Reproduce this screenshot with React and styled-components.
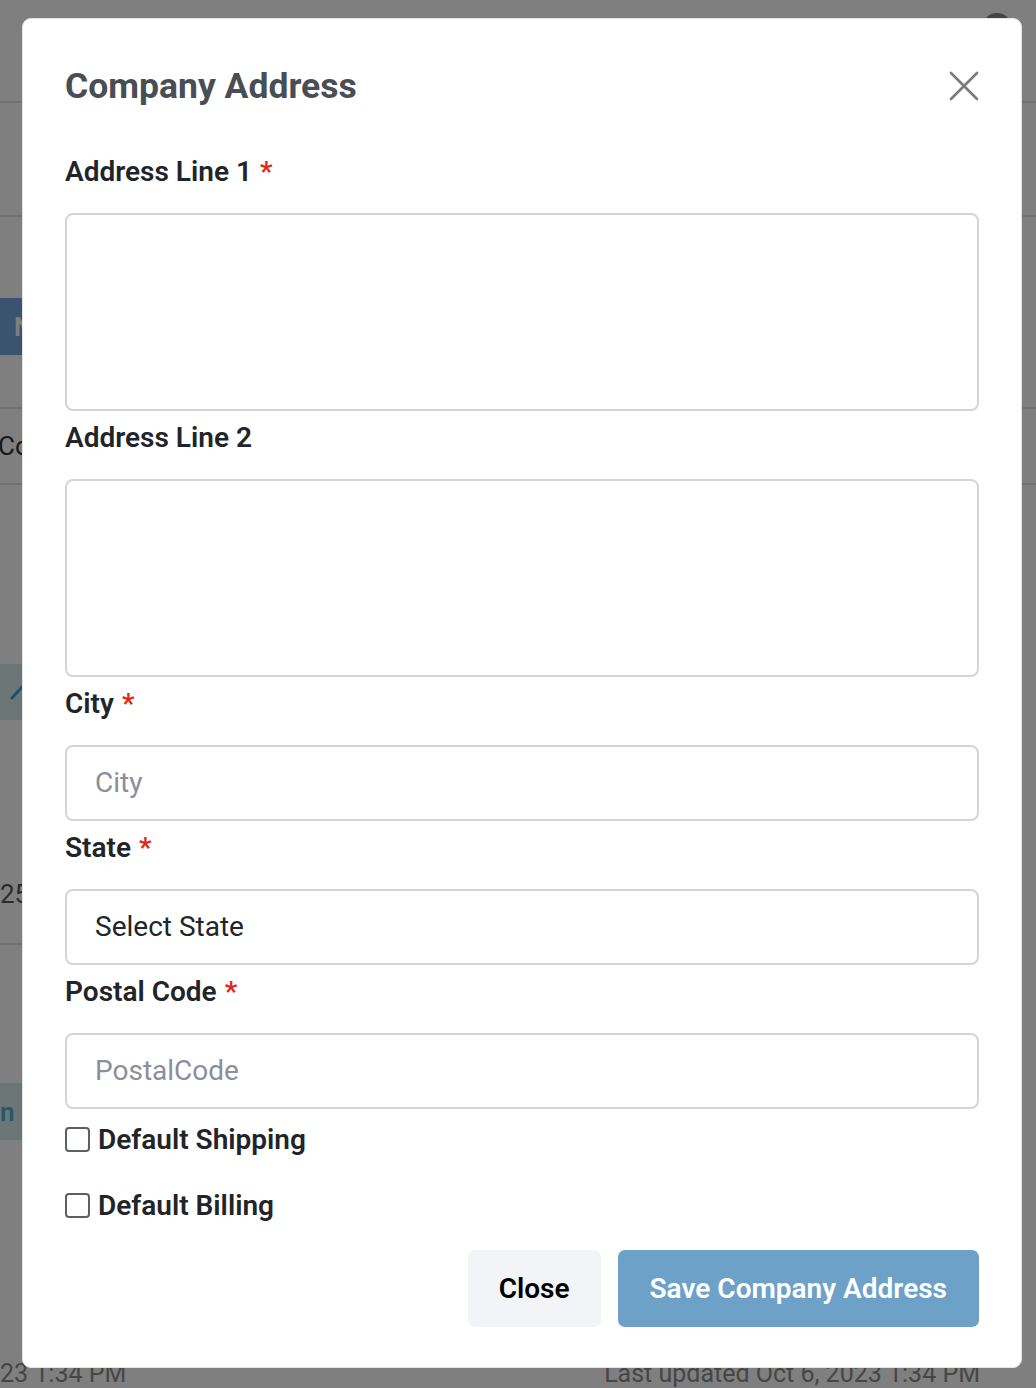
import React from "react";
import styled, { createGlobalStyle } from "styled-components";

const GlobalStyle = createGlobalStyle`
  html, body {
    margin: 0;
    padding: 0;
    background: #ffffff;
    font-family: Roboto, "Liberation Sans", Arial, sans-serif;
  }
  * {
    box-sizing: border-box;
  }
`;

// 뒤쪽 페이지 (모달 뒤에 흐릿하게 보이는 부분)
const Page = styled.div`
  width: 1036px;
  height: 1388px;
  overflow: hidden;
  display: flex;
  flex-direction: column;
  color: #333;
`;

const PageRow = styled.div`
  height: ${(p) => p.h}px;
  width: ${(p) => p.w || "100%"};
  flex-shrink: 0;
  display: flex;
  align-items: ${(p) => p.align || "center"};
  justify-content: space-between;
  border-bottom: ${(p) => (p.line ? "2px solid #e2e2e2" : "0")};
  background: ${(p) => p.bg || "transparent"};
  font-size: ${(p) => p.fs || 26}px;
  color: ${(p) => p.color || "#888"};
`;

const RowText = styled.span`
  margin-left: ${(p) => p.ml || 0}px;
  margin-right: ${(p) => p.mr || 0}px;
  font-weight: ${(p) => p.weight || 400};
  white-space: nowrap;
`;

const Avatar = styled.div`
  width: 30px;
  height: 30px;
  border-radius: 50%;
  background: #888;
  margin-right: 24px;
  margin-top: 13px;
  align-self: flex-start;
`;

const Pencil = styled.svg`
  margin-left: 10px;
`;

// 모달 배경
const Backdrop = styled.div`
  position: fixed;
  inset: 0;
  background: rgba(0, 0, 0, 0.5);
  z-index: 999;
`;

const Dialog = styled.div`
  margin: 18px 0 0 22px;
  width: 1000px;
  background: #ffffff;
  border: 1px solid #e4e4e4;
  border-radius: 9px;
  padding: 46px 42px 40px;
  display: flex;
  flex-direction: column;
`;

// 상단 제목
const Header = styled.div`
  display: flex;
  align-items: center;
  justify-content: space-between;
  margin-bottom: 41px;
`;

const Title = styled.h2`
  margin: 0;
  font-size: 35.5px;
  line-height: 1.2;
  font-weight: 700;
  color: #494e55;
`;

const CloseIcon = styled.button`
  border: none;
  background: transparent;
  padding: 0;
  width: 30px;
  height: 30px;
  display: flex;
  cursor: pointer;
`;

const Group = styled.div`
  display: flex;
  flex-direction: column;
  margin-bottom: 4px;
`;

const Label = styled.label`
  font-size: 28px;
  line-height: 46px;
  font-weight: 600;
  color: #212529;
  margin-bottom: 18px;
`;

const Required = styled.span`
  color: #e3271b;
  margin-left: 8px;
`;

const TextArea = styled.textarea`
  height: 198px;
  width: 100%;
  border: 2px solid #d2d6db;
  border-radius: 8px;
  resize: none;
  padding: 16px 28px;
  font: inherit;
  font-size: 28px;
  outline: none;
`;

const Input = styled.input`
  height: 76px;
  width: 100%;
  border: 2px solid #d2d6db;
  border-radius: 8px;
  padding: 0 28px;
  font-family: inherit;
  font-size: 28px;
  color: #212529;
  outline: none;
  &::placeholder {
    color: #8b8e9b;
  }
`;

const Select = styled.div`
  height: 76px;
  width: 100%;
  border: 2px solid #d2d6db;
  border-radius: 8px;
  padding: 0 28px;
  display: flex;
  align-items: center;
  font-size: 28px;
  color: #212529;
`;

const CheckList = styled.div`
  display: flex;
  flex-direction: column;
  gap: 22px;
  margin-top: 5px;
`;

const CheckRow = styled.label`
  height: 44px;
  display: flex;
  align-items: center;
  gap: 8px;
  font-size: 28px;
  font-weight: 600;
  color: #212529;
`;

const Box = styled.span`
  width: 25px;
  height: 25px;
  border: 2px solid #5c5f63;
  border-radius: 4px;
  flex-shrink: 0;
`;

const Footer = styled.div`
  display: flex;
  justify-content: flex-end;
  gap: 17px;
  margin-top: 22px;
`;

const Button = styled.button`
  height: 77px;
  padding: 0 ${(p) => (p.primary ? 32 : 31)}px;
  border: none;
  border-radius: 7px;
  font-family: inherit;
  font-size: 28px;
  font-weight: 600;
  background: ${(p) => (p.primary ? "#6da1c8" : "#f3f4f8")};
  color: ${(p) => (p.primary ? "#ffffff" : "#000000")};
  cursor: pointer;
`;

const Field = ({ label, required, children }) => (
  <Group>
    <Label>
      {label}
      {required && <Required>*</Required>}
    </Label>
    {children}
  </Group>
);

export default function App() {
  return (
    <>
      <GlobalStyle />
      <Page>
        <PageRow h={103} line>
          <span />
          <Avatar />
        </PageRow>
        <PageRow h={114} line />
        <PageRow h={81} />
        <PageRow h={57} w="520px" bg="#74a9de" color="#ffffff">
          <RowText ml={14} weight={600}>Name</RowText>
        </PageRow>
        <PageRow h={54} line />
        <PageRow h={76} line color="#333">
          <RowText ml={-2}>Co</RowText>
        </PageRow>
        <PageRow h={179} />
        <PageRow h={56} w="520px" bg="#d8ecef">
          <Pencil width="14" height="16" viewBox="0 0 14 16">
            <path d="M2 14 L12 3" stroke="#3d9fd0" strokeWidth="3" strokeLinecap="round" />
          </Pencil>
        </PageRow>
        <PageRow h={124} />
        <PageRow h={101} w="520px" line color="#555">
          <RowText>25</RowText>
        </PageRow>
        <PageRow h={138} />
        <PageRow h={57} w="520px" bg="#d8ecef" color="#4ab2cc">
          <RowText weight={600}>n</RowText>
        </PageRow>
        <PageRow h={200} />
        <PageRow h={48} fs={25} align="flex-end" color="#8c8c8c">
          <RowText>23 1:34 PM</RowText>
          <RowText mr={56}>Last updated Oct 6, 2023 1:34 PM</RowText>
        </PageRow>
      </Page>

      <Backdrop>
        <Dialog>
          <Header>
            <Title>Company Address</Title>
            <CloseIcon aria-label="close">
              <svg width="30" height="30" viewBox="0 0 30 30">
                <path
                  d="M2 2 L28 28 M28 2 L2 28"
                  stroke="#7b7b7b"
                  strokeWidth="2.6"
                  strokeLinecap="round"
                />
              </svg>
            </CloseIcon>
          </Header>

          <Field label="Address Line 1" required>
            <TextArea />
          </Field>
          <Field label="Address Line 2">
            <TextArea />
          </Field>
          <Field label="City" required>
            <Input placeholder="City" />
          </Field>
          <Field label="State" required>
            <Select>Select State</Select>
          </Field>
          <Field label="Postal Code" required>
            <Input placeholder="PostalCode" />
          </Field>

          <CheckList>
            <CheckRow>
              <Box />
              Default Shipping
            </CheckRow>
            <CheckRow>
              <Box />
              Default Billing
            </CheckRow>
          </CheckList>

          <Footer>
            <Button>Close</Button>
            <Button primary>Save Company Address</Button>
          </Footer>
        </Dialog>
      </Backdrop>
    </>
  );
}
